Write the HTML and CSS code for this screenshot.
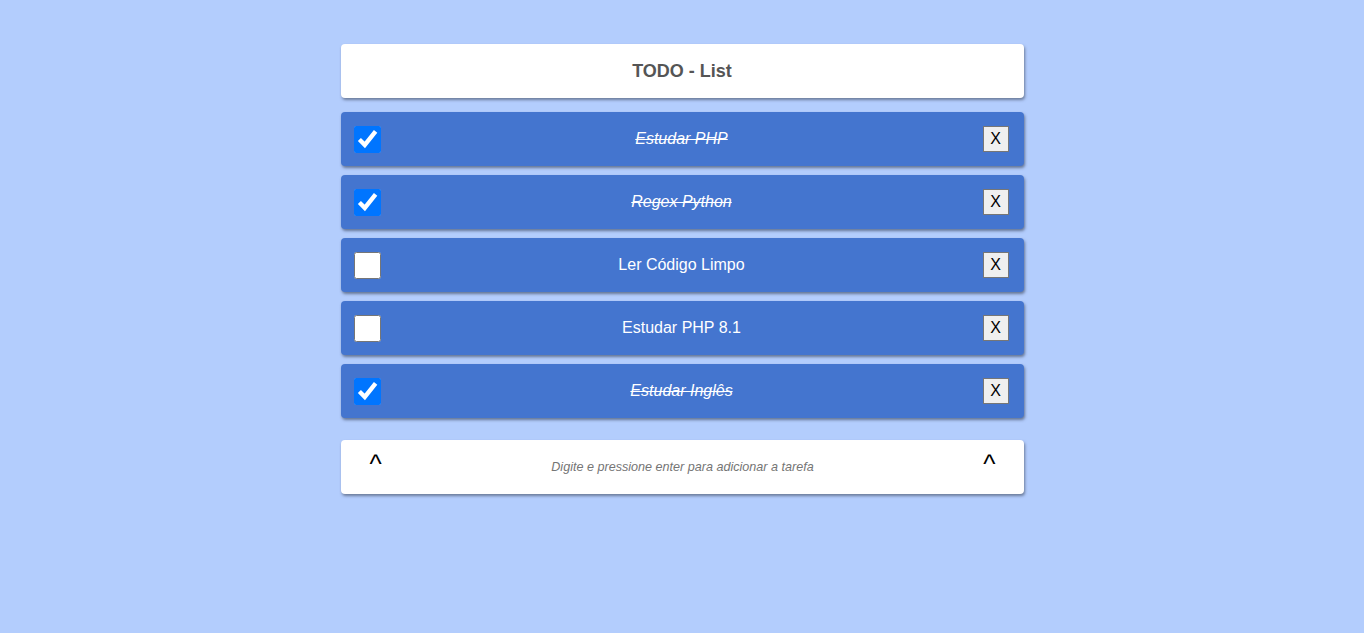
FILE: index.html
```html
<!DOCTYPE html>
<html lang="pt-BR">
<head>
<meta charset="utf-8">
<title>TODO - List</title>
<link rel="stylesheet" href="styles.css">
</head>
<body>
<main class="app">
  <header class="card title">TODO - List</header>
  <ul class="list">
    <li class="item"><input class="check" type="checkbox" checked><span class="label done">Estudar PHP</span><button class="remove">X</button></li>
    <li class="item"><input class="check" type="checkbox" checked><span class="label done">Regex Python</span><button class="remove">X</button></li>
    <li class="item"><input class="check" type="checkbox"><span class="label">Ler Código Limpo</span><button class="remove">X</button></li>
    <li class="item"><input class="check" type="checkbox"><span class="label">Estudar PHP 8.1</span><button class="remove">X</button></li>
    <li class="item"><input class="check" type="checkbox" checked><span class="label done">Estudar Inglês</span><button class="remove">X</button></li>
  </ul>
  <div class="card entry">
    <span class="caret">^</span>
    <input class="new-task" type="text" placeholder="Digite e pressione enter para adicionar a tarefa">
    <span class="caret">^</span>
  </div>
</main>
</body>
</html>
```
FILE: styles.css
```css
html, body {
  margin: 0;
  padding: 0;
}
body {
  background: #b3cdfd;
  font-family: "Liberation Sans", Arial, sans-serif;
  min-height: 633px;
}
.app {
  width: 683px;
  margin: 0 auto;
  padding-top: 44px;
}
.card {
  background: #ffffff;
  border-radius: 4px;
  box-shadow: 1px 2px 3px rgba(60, 70, 90, 0.6);
}
.title {
  height: 54px;
  display: flex;
  align-items: center;
  justify-content: center;
  font-size: 18px;
  font-weight: bold;
  color: #555555;
}
.list {
  list-style: none;
  margin: 14px 0 0 0;
  padding: 0;
  display: flex;
  flex-direction: column;
  gap: 9px;
}
.item {
  height: 54px;
  box-sizing: border-box;
  display: flex;
  align-items: center;
  padding: 0 15px 0 13px;
  background: #4475cf;
  border-radius: 4px;
  box-shadow: 1px 2px 3px rgba(50, 60, 80, 0.6);
}
.check {
  width: 27px;
  height: 27px;
  margin: 0;
  flex: none;
}
.label {
  flex: 1;
  text-align: center;
  color: #ffffff;
  font-size: 16px;
}
.label.done {
  font-style: italic;
  text-decoration: line-through;
}
.remove {
  width: 26px;
  height: 26px;
  padding: 0;
  margin: 0;
  flex: none;
  background: #efefef;
  border: 1px solid #767676;
  border-radius: 0;
  font-family: "Liberation Sans", Arial, sans-serif;
  font-size: 16px;
  color: #000000;
}
.entry {
  margin-top: 22px;
  height: 54px;
  display: flex;
  align-items: center;
  padding: 0 29px 0 29px;
}
.caret {
  align-self: flex-start;
  margin-top: 9px;
  font-size: 26px;
  line-height: 30px;
  color: #000000;
  flex: none;
}
.caret + .new-task + .caret {
  margin-right: -1px;
}
.new-task {
  flex: 1;
  border: none;
  outline: none;
  background: transparent;
  text-align: center;
  font-family: "Liberation Sans", Arial, sans-serif;
  font-size: 12.6px;
  font-style: italic;
  color: #555555;
}
.new-task::placeholder {
  color: #757575;
  font-style: italic;
}
```
